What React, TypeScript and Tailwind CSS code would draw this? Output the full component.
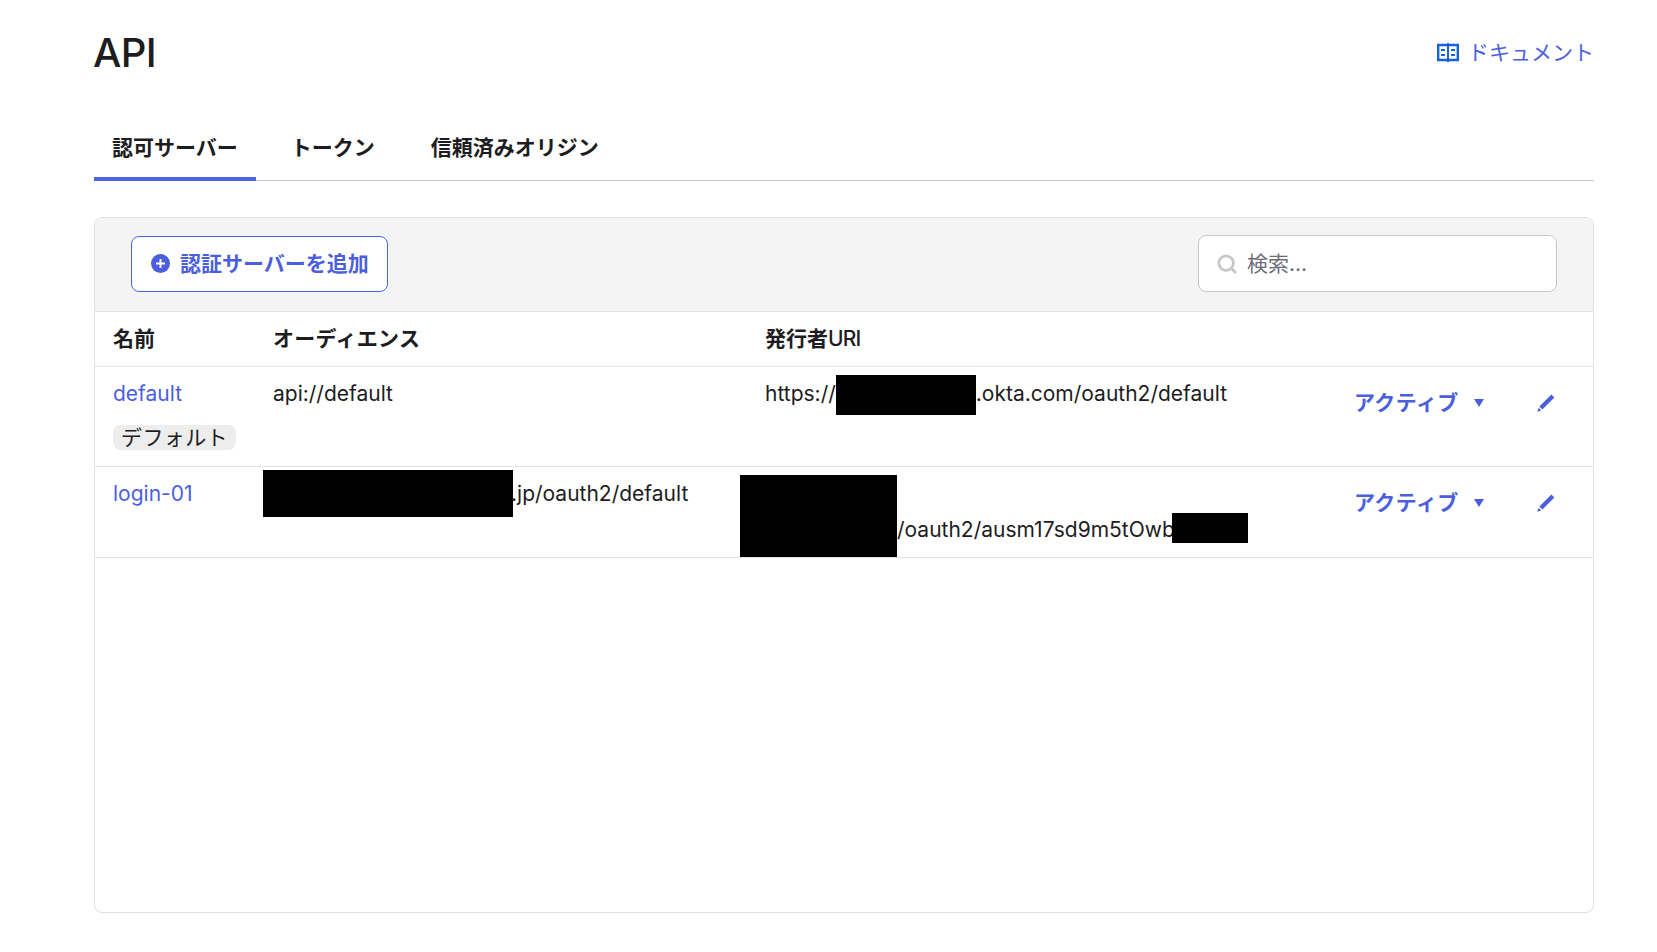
import { Search } from "lucide-react";

const rowGrid = "grid grid-cols-[160px_492px_589px_1fr]";

function Redact({ w, h, dy, className = "" }: { w: number; h: number; dy: number; className?: string }) {
  // black box sits over the text, the spacer keeps the line flowing
  return (
    <span className={`relative inline-block h-0 ${className}`} style={{ width: w }}>
      <span className="absolute left-0 bg-black" style={{ width: w, height: h, top: dy }} />
    </span>
  );
}

function StatusCell() {
  return (
    <div className="flex items-start justify-between pl-[18px] pt-[18px] pr-[38px]">
      <button className="flex items-center gap-[15px] font-semibold tracking-[0.4px] text-[#4b5fde]">
        アクティブ
        <span className="h-0 w-0 border-x-[5px] border-t-[8px] border-x-transparent border-t-[#4b5fde]" />
      </button>
      <svg className="mt-[9px]" width="18" height="18" viewBox="0 0 18 18" fill="#4b5fde">
        <path d="M14.4 0.6 L17.4 3.6 L5.4 15.6 L2.4 12.6 Z" />
        <path d="M1.6 13.8 L4.2 16.4 L0.2 17.8 Z" />
      </svg>
    </div>
  );
}

export default function App() {
  return (
    <div className="min-h-[952px] bg-white pl-[94px] pr-[63px] pt-[27px] font-['Inter','Noto_Sans_CJK_JP',sans-serif] text-[21px] leading-9 text-[#1d1d21]">
      <div className="flex items-center justify-between">
        <h1 className="text-[40px] leading-[52px] font-medium tracking-[-0.6px] -ml-px">API</h1>
        <a className="flex items-center gap-[9px] text-[#4b5fde]">
          <svg className="-mt-px" width="22" height="19" viewBox="0 0 22 19" fill="none" stroke="#1662dd" strokeWidth="2.4">
            <path d="M1.2 2h19.6v15H1.2z" />
            <path d="M11 0v19" strokeWidth="2" />
            <path d="M4 7h4M4 12h4M14 7h4M14 12h4" strokeWidth="2" />
          </svg>
          ドキュメント
        </a>
      </div>

      <div className="mt-[40px] flex border-b border-[#c6c6cb] font-semibold">
        <div className="-mb-px border-b-4 border-[#4b64e2] px-[18px] pb-[11px] pt-[11px]">認可サーバー</div>
        <div className="ml-[17px] px-[18px] pb-[11px] pt-[11px]">トークン</div>
        <div className="ml-[20px] px-[18px] pb-[11px] pt-[11px]">信頼済みオリジン</div>
      </div>

      <div className="mt-[36px] h-[696px] overflow-hidden rounded-lg border border-[#e1e1e1]">
        <div className="flex h-[94px] items-center justify-between border-b border-[#e1e1e1] bg-[#f4f4f4] px-[36px] pb-[2px]">
          <button className="flex h-[56px] w-[257px] items-center gap-[10px] rounded-lg border border-[#4b64e2] bg-white pl-[19px] font-semibold text-[#4b5fde]">
            <svg width="19" height="19" viewBox="0 0 19 19">
              <circle cx="9.5" cy="9.5" r="9.5" fill="#4b5fde" />
              <path d="M9.5 5v9M5 9.5h9" stroke="white" strokeWidth="2" />
            </svg>
            認証サーバーを追加
          </button>
          <div className="flex h-[57px] w-[359px] items-center gap-[9px] rounded-lg border border-[#c6c6cb] bg-white pl-[17px] text-[#6e6e78]">
            <Search className="h-[22px] w-[22px] text-[#c6c6cb]" strokeWidth={3} />
            検索...
          </div>
        </div>

        <div className={`${rowGrid} h-[55px] items-center border-b border-[#e1e1e1] font-semibold`}>
          <div className="pl-[18px]">名前</div>
          <div className="pl-[18px] tracking-[0.3px]">オーディエンス</div>
          <div className="pl-[18px]">
            発行者<span className="font-medium tracking-[-0.8px]">URI</span>
          </div>
          <div />
        </div>

        <div className={`${rowGrid} h-[100px] border-b border-[#e1e1e1]`}>
          <div className="pl-[18px] pt-[9px]">
            <div className="text-[#4b5fde]">default</div>
            <span className="mt-[13px] inline-block rounded-lg bg-[#ededed] px-[8px] leading-[25px] tracking-[0.4px]">デフォルト</span>
          </div>
          <div className="pl-[18px] pt-[9px]">api://default</div>
          <div className="pl-[18px] pt-[9px] whitespace-nowrap">
            https://
            <Redact w={140} h={40} dy={-26} />
            .okta.com/oauth2/default
          </div>
          <StatusCell />
        </div>

        <div className={`${rowGrid} h-[91px] border-b border-[#e1e1e1]`}>
          <div className="pl-[18px] pt-[9px] text-[#4b5fde]">login-01</div>
          <div className="pl-[18px] pt-[9px] whitespace-nowrap">
            <span className="relative inline-block h-0 w-[238px]">
              <span className="absolute -left-[10px] -top-[31px] h-[47px] w-[250px] bg-black" />
            </span>
            .jp/oauth2/default
          </div>
          <div className="relative pl-[18px] pt-[45px] whitespace-nowrap">
            <span className="absolute left-[-7px] top-[8px] h-[82px] w-[157px] bg-black" />
            <span className="inline-block w-[132px]" />
            /oauth2/ausm17sd9m5tOwb
            <Redact w={76} h={30} dy={-24} className="-ml-[3px]" />
          </div>
          <StatusCell />
        </div>
      </div>
    </div>
  );
}
